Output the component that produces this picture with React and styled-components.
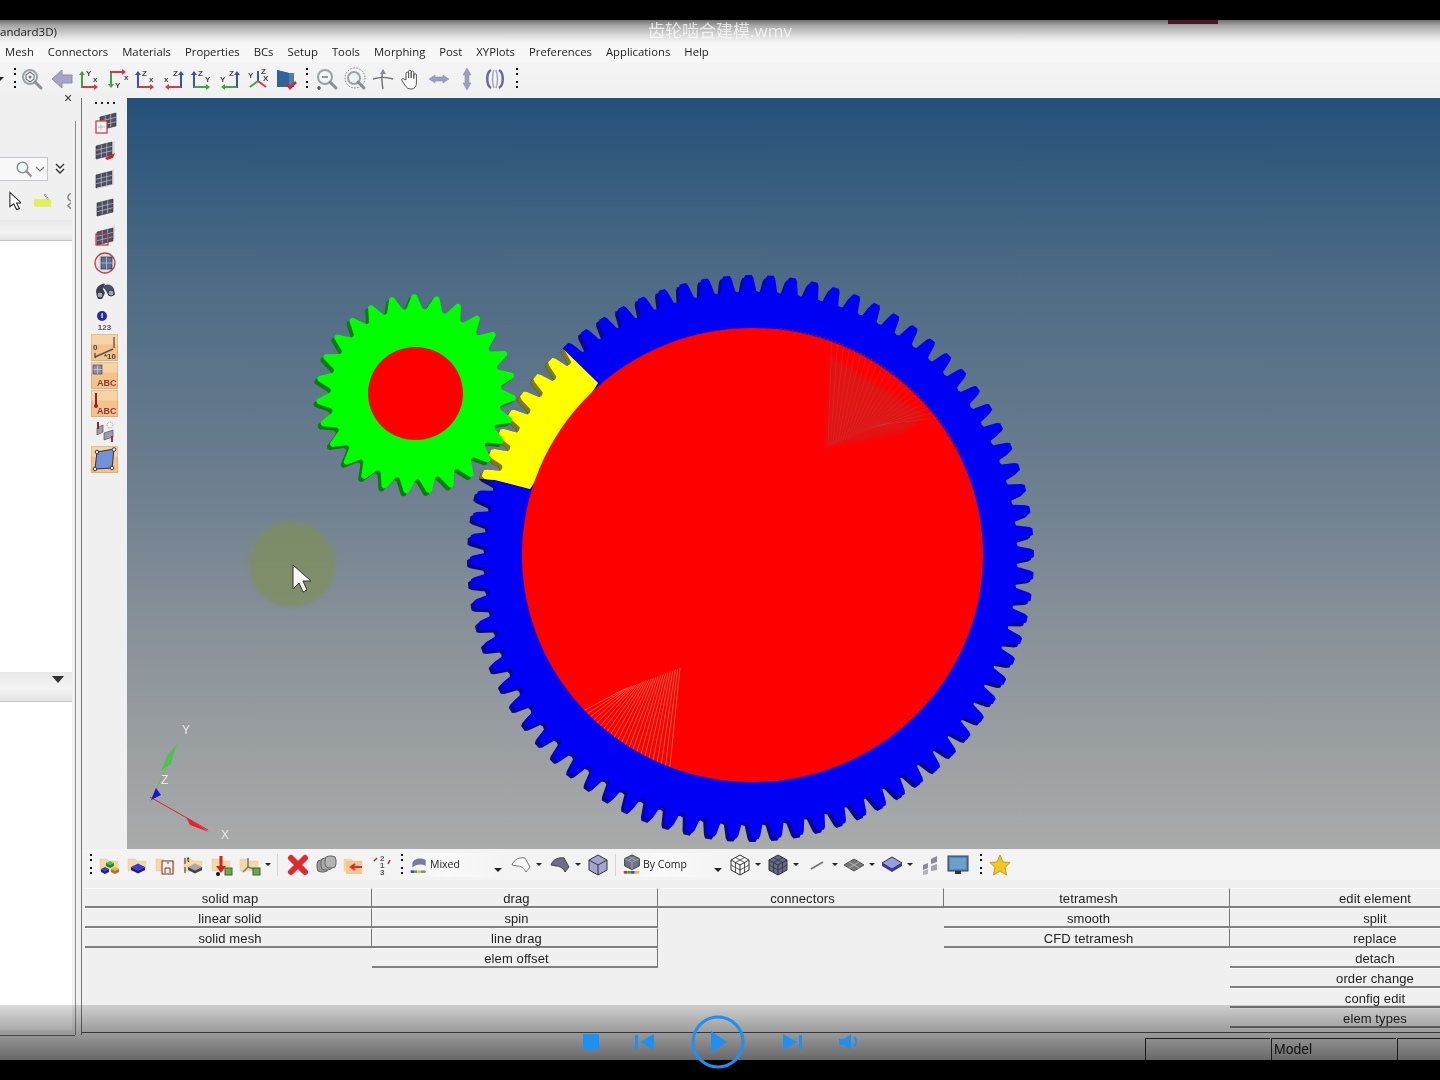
import styled, { createGlobalStyle } from 'styled-components';

const GlobalStyle = createGlobalStyle`
  html, body {
    margin: 0;
    padding: 0;
    background: #000;
  }
`;

const UI_FONT = `'Open Sans', 'Noto Sans CJK SC', sans-serif`;
const CLASSIC_FONT = `'Liberation Sans', Arial, sans-serif`;

const Frame = styled.div`
  position: relative;
  width: 1440px;
  height: 1080px;
  display: flex;
  flex-direction: column;
  overflow: hidden;
  background: #000;
  filter: blur(0.35px);
`;

const BlackStrip = styled.div`
  flex: 0 0 20px;
  background: #000;
`;

const TitleBar = styled.div`
  position: relative;
  flex: 0 0 23px;
  display: flex;
  align-items: center;
  background: linear-gradient(#6f6f6f 0%, #a8a8a8 25%, #dedede 70%, #f7f7f7 100%);
  font: 11.5px ${UI_FONT};
  color: #222;
`;

const WindowTab = styled.div`
  position: absolute;
  left: 1168px;
  top: 0;
  width: 50px;
  height: 4px;
  background: #4a1524;
`;

const VideoName = styled.div`
  position: absolute;
  left: 648px;
  top: 0;
  font: 17px ${UI_FONT};
  line-height: 21px;
  color: rgba(255, 255, 255, 0.72);
  white-space: nowrap;
`;

const MenuBar = styled.div`
  flex: 0 0 20px;
  box-sizing: border-box;
  display: flex;
  align-items: center;
  gap: 14px;
  padding: 0 0 3px 5px;
  background: #f7f7f7;
  font: 11.3px ${UI_FONT};
  color: #1c1c1c;
`;

const MainToolbar = styled.div`
  flex: 0 0 35px;
  display: flex;
  align-items: flex-start;
  padding-top: 4px;
  box-sizing: border-box;
  background: linear-gradient(#f4f4f4, #f0f0f0);
`;

const Slot = styled.div`
  flex: 0 0 ${(p) => p.$w || 28}px;
  height: 24px;
  margin-left: ${(p) => p.$ml || 0}px;
  display: flex;
  align-items: center;
  justify-content: center;
`;

const Grip = styled.div`
  flex: 0 0 ${(p) => p.$w || 14}px;
  margin-left: ${(p) => p.$ml || 0}px;
  height: 24px;
  display: flex;
  flex-direction: column;
  align-items: center;
  justify-content: space-between;
  padding: 1px 0;
  box-sizing: border-box;
  &::before, &::after {
    content: '';
    width: 2px;
    height: 9px;
    background: repeating-linear-gradient(#111 0 2px, transparent 2px 5px);
  }
`;

const Caret = styled.div`
  flex: 0 0 auto;
  margin-left: ${(p) => p.$ml || 0}px;
  margin-top: 10px;
  width: 0;
  height: 0;
  border-left: ${(p) => p.$size || 3}px solid transparent;
  border-right: ${(p) => p.$size || 3}px solid transparent;
  border-top: ${(p) => p.$size || 3}px solid #222;
`;

const Divider = styled.div`
  flex: 0 0 1px;
  height: 22px;
  margin: 1px ${(p) => p.$m || 6}px 0;
  background: #d4d4d4;
`;

const Workspace = styled.div`
  position: relative;
  flex: 0 0 932px;
  display: flex;
  background: #f0f0f0;
`;

const LeftPanel = styled.div`
  flex: 0 0 72px;
  display: flex;
  flex-direction: column;
  overflow: hidden;
`;

const CloseMark = styled.div`
  position: absolute;
  top: -8px;
  left: 64px;
  font: 14px/16px ${CLASSIC_FONT};
  color: #333;
`;

const PanelHead = styled.div`
  flex: 0 0 59px;
`;

const SearchRow = styled.div`
  flex: 0 0 24px;
  display: flex;
  align-items: center;
`;

const SearchField = styled.div`
  width: 48px;
  height: 24px;
  box-sizing: border-box;
  display: flex;
  align-items: center;
  justify-content: flex-end;
  gap: 2px;
  padding-right: 2px;
  background: #f8f8f8;
  border: 1px solid #c2c6cc;
  border-left: none;
`;

const DoubleChevron = styled.div`
  margin-left: 7px;
  display: flex;
`;

const PanelTools = styled.div`
  flex: 0 0 39px;
  display: flex;
  align-items: center;
  gap: 12px;
  padding-left: 8px;
  box-sizing: border-box;
`;

const PanelBand = styled.div`
  flex: 0 0 ${(p) => p.$h}px;
  display: flex;
  justify-content: flex-end;
  padding: 4px 8px 0 0;
  box-sizing: border-box;
  background: linear-gradient(#e8e8e8, #f4f4f4 60%, #e2e2e2);
  border-bottom: 1px solid #c8c8c8;
`;

const PanelList = styled.div`
  flex: ${(p) => (p.$h ? `0 0 ${p.$h}px` : '1')};
  background: #fff;
`;

const PanelGutter = styled.div`
  flex: 0 0 10px;
  background:
    linear-gradient(#8c8c8c, #8c8c8c) 3px 23px / 1px 100% no-repeat,
    linear-gradient(#777, #777) 9px 0 / 1px 100% no-repeat,
    #f0f0f0;
`;

const RightArea = styled.div`
  flex: 1;
  min-width: 0;
  display: flex;
  flex-direction: column;
`;

const UpperRow = styled.div`
  flex: 0 0 751px;
  display: flex;
`;

const SideToolbar = styled.div`
  flex: 0 0 45px;
  display: flex;
  flex-direction: column;
  align-items: center;
  background: #f0f0f0;
`;

const HorizontalGrip = styled.div`
  flex: 0 0 11px;
  width: 20px;
  margin-left: 1px;
  background: repeating-linear-gradient(90deg, #222 0 2px, transparent 2px 6px) 0 4px / 100% 2px no-repeat;
`;

const SideSlot = styled.div`
  flex: 0 0 28px;
  width: 28px;
  display: flex;
  align-items: center;
  justify-content: center;
`;

const InfoStack = styled.div`
  flex: 0 0 28px;
  display: flex;
  flex-direction: column;
  align-items: center;
  justify-content: flex-end;
  font: bold 8px ${CLASSIC_FONT};
  line-height: 10px;
  color: #555;
`;

const InfoDot = styled.div`
  width: 10px;
  height: 10px;
  margin: 0 5px 2px 0;
  border-radius: 50%;
  background: #2a2aa0;
  color: #fff;
  text-align: center;
  font: bold 8px/10px ${CLASSIC_FONT};
`;

const Viewport = styled.div`
  flex: 1;
  min-width: 0;
  background: linear-gradient(#245079 0%, #4d6b85 24%, #6e7f90 52%, #8a9299 72%, #a9abaa 100%);
`;

const ViewportCanvas = styled.svg`
  display: block;
  width: 1313px;
  height: 751px;
`;

const BottomToolbar = styled.div`
  flex: 0 0 31px;
  display: flex;
  align-items: flex-start;
  padding: 4px 0 0 2px;
  box-sizing: border-box;
  background: #f3f3f3;
`;

const Combo = styled.div`
  flex: 0 0 ${(p) => p.$w}px;
  margin-left: ${(p) => p.$ml || 0}px;
  height: 24px;
  display: flex;
  align-items: center;
  background: linear-gradient(90deg, #f3f3f3, #fafafa 40%, #f3f3f3);
  font: ${(p) => p.$fs}px ${UI_FONT};
  color: #222;
`;

const ComboLabel = styled.span`
  flex: 1;
  padding-bottom: 2px;
`;

const PanelGrid = styled.div`
  flex: 1;
  display: grid;
  grid-template-columns: 287px repeat(4, 286px);
  align-items: start;
  padding: 8px 0 0 3px;
  overflow: hidden;
  background: #f0f0f0;
`;

const PanelColumn = styled.div`
  display: flex;
  flex-direction: column;
`;

const PanelButton = styled.div`
  height: 20px;
  box-sizing: border-box;
  padding-left: 4px;
  text-align: center;
  font: 13px/19px ${CLASSIC_FONT};
  letter-spacing: 0.1px;
  color: #222;
  border-bottom: 2px solid #808080;
  border-right: ${(p) => (p.$open ? 'none' : '1px solid #777')};
  border-top: 1px solid #fbfbfb;
`;

const StatusBar = styled.div`
  flex: 0 0 30px;
  display: flex;
  align-items: flex-end;
  padding-left: 1145px;
  background:
    linear-gradient(#8c8c8c, #8c8c8c) 75px 0 / 1px 5px no-repeat,
    linear-gradient(#777, #777) 81px 0 / 1px 5px no-repeat,
    linear-gradient(#555, #555) 81px 2px / 100% 1px no-repeat,
    linear-gradient(#777, #777) 0 5px / 75px 1px no-repeat,
    #f0f0f0;
`;

const StatusCell = styled.div`
  flex: 0 0 125px;
  height: 22px;
  margin-right: 1px;
  box-sizing: border-box;
  padding-left: 2px;
  border-top: 1px solid #333;
  border-left: 1px solid #333;
  font: 14px/21px ${CLASSIC_FONT};
  color: #222;
`;

const VideoShade = styled.div`
  position: absolute;
  left: 0;
  right: 0;
  top: 1005px;
  height: 55px;
  background: linear-gradient(rgba(0, 0, 0, 0.14), rgba(0, 0, 0, 0.57));
  pointer-events: none;
`;

const PlayerControls = styled.div`
  position: absolute;
  left: 580px;
  top: 1014px;
  display: flex;
  align-items: center;
  color: #1e90f2;
`;

const PlayerSlot = styled.div`
  flex: 0 0 ${(p) => p.$w}px;
  height: 55px;
  display: flex;
  align-items: center;
  justify-content: center;
`;

const MENU_ITEMS = ['Mesh', 'Connectors', 'Materials', 'Properties', 'BCs', 'Setup', 'Tools', 'Morphing', 'Post', 'XYPlots', 'Preferences', 'Applications', 'Help'];

const PANEL_COLUMNS = [
  ['solid map', 'linear solid', 'solid mesh'],
  ['drag', 'spin', 'line drag', 'elem offset'],
  ['connectors'],
  ['tetramesh', 'smooth', 'CFD tetramesh'],
  ['edit element', 'split', 'replace', 'detach', 'order change', 'config edit', 'elem types'],
];

/* ---------- small drawing helpers ---------- */

const Ico = ({ s = 24, children }) => (
  <svg width={s} height={s} viewBox="0 0 24 24" fill="none">
    {children}
  </svg>
);

const Lbl = ({ x, y, c = '#444', size = 8, children }) => (
  <text x={x} y={y} fontSize={size} fontWeight="bold" fontFamily="Liberation Sans, sans-serif" fill={c}>
    {children}
  </text>
);

const AxisArrow = ({ x1, y1, x2, y2, c }) => {
  const vertical = x1 === x2;
  const d = vertical ? Math.sign(y2 - y1) : Math.sign(x2 - x1);
  const head = vertical
    ? `${x2 - 3},${y2 - 3 * d} ${x2 + 3},${y2 - 3 * d} ${x2},${y2 + d}`
    : `${x2 - 3 * d},${y2 - 3} ${x2 - 3 * d},${y2 + 3} ${x2 + d},${y2}`;
  return (
    <g>
      <line x1={x1} y1={y1} x2={x2} y2={y2} stroke={c} strokeWidth="2" />
      <polygon points={head} fill={c} />
    </g>
  );
};

const GREEN = '#3fa53f';
const RED = '#d8384a';
const BLUE = '#3a4fb8';

const AxisIcon = ({ mode, a, b, ca, cb }) => (
  <Ico>
    {mode === 'up' && (
      <>
        <AxisArrow x1={4} y1={21} x2={4} y2={5} c={ca} />
        <AxisArrow x1={4} y1={20} x2={19} y2={20} c={cb} />
        <Lbl x={8} y={9}>{a}</Lbl>
        <Lbl x={15} y={15}>{b}</Lbl>
      </>
    )}
    {mode === 'down' && (
      <>
        <AxisArrow x1={5} y1={5} x2={5} y2={20} c={ca} />
        <AxisArrow x1={4} y1={5} x2={19} y2={5} c={cb} />
        <Lbl x={9} y={21}>{a}</Lbl>
        <Lbl x={18} y={13}>{b}</Lbl>
      </>
    )}
    {mode === 'left' && (
      <>
        <AxisArrow x1={19} y1={21} x2={19} y2={5} c={ca} />
        <AxisArrow x1={19} y1={20} x2={4} y2={20} c={cb} />
        <Lbl x={11} y={9}>{a}</Lbl>
        <Lbl x={2} y={15}>{b}</Lbl>
      </>
    )}
  </Ico>
);

const Magnifier = ({ s = 24, children, ring = '#9aa3a8' }) => (
  <Ico s={s}>
    <circle cx="10" cy="10" r="7" fill="#f4f6f7" stroke={ring} strokeWidth="2" />
    <line x1="15" y1="15" x2="21" y2="21" stroke="#8a8f94" strokeWidth="3" strokeLinecap="round" />
    {children}
  </Ico>
);

const Quad = ({ x, y, c = '#4c4f60' }) => (
  <g transform={`translate(${x} ${y}) skewY(-14)`}>
    <rect width="16" height="13" fill={c} stroke="#2d2f3a" strokeWidth="0.6" />
    <path d="M5.300 0v13M10.700 0v13M0 4.300h16M0 8.700h16" stroke="#c9ccd6" strokeWidth="0.6" />
  </g>
);

const FolderBack = () => <path d="M2 6h7l2 2h9v10H2z" fill="#f2d9a6" stroke="#e8c88c" strokeWidth="0.5" />;

const Block = ({ x, y, c, d, w = 6 }) => (
  <g>
    <polygon points={`${x},${y} ${x + w},${y - w / 2} ${x + 2 * w},${y} ${x + w},${y + w / 2}`} fill={c} />
    <polygon points={`${x},${y} ${x + w},${y + w / 2} ${x + 2 * w},${y} ${x + 2 * w},${y + 3} ${x + w},${y + 3 + w / 2} ${x},${y + 3}`} fill={d} />
  </g>
);

const OrangeTile = ({ children }) => (
  <svg width="27" height="27" viewBox="0 0 27 27" fill="none">
    <rect x="0.5" y="0.5" width="26" height="26" fill="#f4c28a" stroke="#d8b078" />
    <rect x="0.5" y="0.5" width="26" height="10" fill="#f8dab0" opacity="0.7" />
    {children}
  </svg>
);

const Cube = ({ fill = '#a4a4d0', grid }) => (
  <Ico>
    <polygon points="12,2 21,7 21,17 12,22 3,17 3,7" fill={fill} stroke="#333" strokeWidth="1" />
    <path d="M3 7l9 5 9-5M12 12v10" stroke="#333" strokeWidth="1" fill="none" />
    {grid && <path d="M7.500 4.500l9 5M16.500 4.500l-9 5M3 12l9 5 9-5M7.500 9.500v10M16.500 9.500v10" stroke="#333" strokeWidth="0.8" />}
  </Ico>
);

const ToolbarTop = () => (
  <MainToolbar>
    <Caret $ml={-4} $size={4} />
    <Grip $ml={8} $w={6} />
    <Slot>
      <Magnifier>
        <polygon points="10,5 14,8 14,12 10,15 6,12 6,8" fill="none" stroke="#777" strokeWidth="1.200" />
        <circle cx="10" cy="10" r="1.500" fill="#777" />
      </Magnifier>
    </Slot>
    <Slot $ml={2}>
      <Ico>
        <polygon points="2,12 12,3 12,8 22,8 22,16 12,16 12,21" fill="#a7a2c8" stroke="#8f8bb0" strokeWidth="1" />
      </Ico>
    </Slot>
    <Slot><AxisIcon mode="up" a="Y" b="x" ca={GREEN} cb={RED} /></Slot>
    <Slot><AxisIcon mode="down" a="Y" b="x" ca={GREEN} cb={RED} /></Slot>
    <Slot><AxisIcon mode="up" a="Z" b="x" ca={BLUE} cb={RED} /></Slot>
    <Slot><AxisIcon mode="left" a="Z" b="x" ca={BLUE} cb={RED} /></Slot>
    <Slot><AxisIcon mode="up" a="Z" b="Y" ca={BLUE} cb={GREEN} /></Slot>
    <Slot><AxisIcon mode="left" a="Z" b="Y" ca={BLUE} cb={GREEN} /></Slot>
    <Slot>
      <Ico>
        <path d="M12 14V4" stroke={BLUE} strokeWidth="2" />
        <path d="M12 14l8 6" stroke={RED} strokeWidth="2" />
        <path d="M12 14l-8 6" stroke={GREEN} strokeWidth="2" />
        <Lbl x={2} y={11}>Y</Lbl>
        <Lbl x={15} y={7}>Z</Lbl>
        <Lbl x={17} y={14}>X</Lbl>
      </Ico>
    </Slot>
    <Slot>
      <Ico>
        <polygon points="3,3 15,6 20,6 20,20 3,20" fill="#4a7fb0" />
        <polygon points="3,3 15,6 15,20 3,20" fill="#2f6496" />
        <path d="M13 17l3 4 6-6" stroke="#d8202c" strokeWidth="2.500" />
      </Ico>
    </Slot>
    <Grip $w={14} />
    <Slot $ml={-1}>
      <Magnifier>
        <path d="M7 10h6" stroke="#777" strokeWidth="1.500" />
        <path d="M2 21h4M4 19v4" stroke="#333" strokeWidth="1.200" />
      </Magnifier>
    </Slot>
    <Slot>
      <Ico>
        <circle cx="12" cy="11" r="10" stroke="#555" strokeWidth="0.800" strokeDasharray="1.500 1.500" />
        <circle cx="11" cy="11" r="6" fill="#eef0f2" stroke="#9aa3a8" strokeWidth="2" />
        <line x1="15" y1="15" x2="21" y2="21" stroke="#8a8f94" strokeWidth="3" strokeLinecap="round" />
      </Ico>
    </Slot>
    <Slot>
      <Ico>
        <path d="M2 12c6-2 14-2 20 0M12 3c-1.500 6-1.500 12 0 19" stroke="#6c6f78" strokeWidth="1.400" />
        <polygon points="12,2 9,7 15,7" fill="#8b8b9a" />
      </Ico>
    </Slot>
    <Slot>
      <Ico>
        <path d="M7 13V6.500a1.300 1.300 0 0 1 2.600 0V11V4.500a1.300 1.300 0 0 1 2.600 0V11V5.500a1.300 1.300 0 0 1 2.600 0V11.500V8a1.300 1.300 0 0 1 2.600 0v8c0 3.500-2 6-5.500 6-3 0-4.500-1.500-6-4l-3-4.500c-.8-1.500 1-2.500 2-1.500z" fill="#fdfdfd" stroke="#555" strokeWidth="1" />
      </Ico>
    </Slot>
    <Slot>
      <Ico>
        <polygon points="2,12 8,8 8,10 16,10 16,8 22,12 16,16 16,14 8,14 8,16" fill="#9d9dc6" stroke="#8383a8" strokeWidth="0.500" />
      </Ico>
    </Slot>
    <Slot>
      <Ico>
        <polygon points="12,1 16,8 14,8 14,16 16,16 12,23 8,16 10,16 10,8 8,8" fill="#9d9dc6" stroke="#8383a8" strokeWidth="0.500" />
      </Ico>
    </Slot>
    <Slot>
      <Ico>
        <path d="M8 3C3 6 3 18 8 21M16 3c5 3 5 15 0 18" stroke="#6a6a9c" strokeWidth="2.500" />
        <path d="M11 3c-2 5-2 13 0 18M13 3c2 5 2 13 0 18" stroke="#a4a4c8" strokeWidth="1.500" />
      </Ico>
    </Slot>
    <Grip $w={16} />
  </MainToolbar>
);

const SIDE_ICONS = [
  <Ico key="a"><Quad x={7} y={6} /><rect x="3" y="10" width="11" height="12" fill="#fdf4f4" stroke="#c43040" strokeWidth="1.200" /><path d="M8 13v6M5 16h7" stroke="#999" strokeWidth="0.600" /></Ico>,
  <Ico key="b"><Quad x={3} y={7} /><path d="M21 2v12" stroke="#ccc" /><path d="M12 19l10-5-2 5-6 2z" fill="#d8202c" /></Ico>,
  <Ico key="c"><Quad x={3} y={8} /><path d="M4 21l14-3M20 2v16" stroke="#c8c8c8" /></Ico>,
  <Ico key="d"><Quad x={4} y={8} /></Ico>,
  <Ico key="e"><path d="M21 2v14" stroke="#ccc" /><Quad x={4} y={9} /><rect x="3" y="11" width="12" height="11" stroke="#c43040" strokeWidth="1.200" /></Ico>,
  <Ico key="f"><circle cx="12" cy="12" r="10" fill="#e8dede" stroke="#b04a50" strokeWidth="1.300" /><rect x="8" y="6" width="11" height="12" fill="#5b6f98" stroke="#2d3040" strokeWidth="0.700" /><path d="M13.500 6v12M8 12h11" stroke="#c9ccd6" strokeWidth="0.700" /></Ico>,
  <Ico key="g"><path d="M3 13c0-5 5-9 9-8l-2 5 2 4-3 6H5z" fill="#3a3f52" /><path d="M10 8c3-4 9-3 11 2l1 6-6 1-3-5z" fill="#4a5068" /><circle cx="7" cy="16" r="3" fill="#9aa" stroke="#334" /><circle cx="18" cy="14" r="3" fill="#9aa" stroke="#334" /></Ico>,
];

const ORANGE_ICONS = [
  <OrangeTile key="a"><path d="M4 23l18-8" stroke="#555" strokeWidth="1.500" /><path d="M4 19v5M23 3v11" stroke="#444" strokeWidth="1.200" /><Lbl x={2} y={16} size={8} c="#444">0</Lbl><Lbl x={13} y={25} size={8} c="#444">*10</Lbl></OrangeTile>,
  <OrangeTile key="b"><rect x="2" y="3" width="9" height="9" fill="#8a8ea8" stroke="#333" strokeWidth="0.600" /><path d="M6.500 3v9M2 7.500h9" stroke="#ddd" strokeWidth="0.600" /><Lbl x={6} y={24} size={9} c="#8a3b3b">ABC</Lbl></OrangeTile>,
  <OrangeTile key="c"><path d="M5 3v12" stroke="#8a2430" strokeWidth="2" /><circle cx="5" cy="16" r="2" fill="#8a2430" /><Lbl x={6} y={24} size={9} c="#8a3b3b">ABC</Lbl></OrangeTile>,
];

const ToolbarSide = () => (
  <SideToolbar>
    <HorizontalGrip />
    {SIDE_ICONS.map((icon, i) => (
      <SideSlot key={i}>{icon}</SideSlot>
    ))}
    <InfoStack>
      <InfoDot>i</InfoDot>
      123
    </InfoStack>
    {ORANGE_ICONS.map((icon, i) => (
      <SideSlot key={i}>{icon}</SideSlot>
    ))}
    <SideSlot>
      <Ico>
        <path d="M4 9l6-3v7l-6 3z" fill="#9a9cb0" stroke="#444" strokeWidth="0.600" />
        <path d="M5 3v7" stroke="#8a2430" strokeWidth="2" />
        <path d="M11 14l9-3v7l-9 3z" fill="#9a9cb0" stroke="#444" strokeWidth="0.600" />
        <path d="M19 17v6" stroke="#c02030" strokeWidth="2" />
        <circle cx="17" cy="6" r="3" stroke="#999" strokeDasharray="1 1" />
      </Ico>
    </SideSlot>
    <SideSlot>
      <OrangeTile>
        <polygon points="6,6 23,3 21,22 4,23" fill="#6f92d8" stroke="#333" strokeWidth="1" />
        <circle cx="6" cy="6" r="1.800" fill="#fff" stroke="#333" />
        <circle cx="23" cy="3.500" r="1.800" fill="#fff" stroke="#333" />
        <circle cx="21" cy="22" r="1.800" fill="#fff" stroke="#333" />
        <circle cx="4" cy="23" r="1.800" fill="#fff" stroke="#333" />
      </OrangeTile>
    </SideSlot>
  </SideToolbar>
);

const ToolbarBottom = () => (
  <BottomToolbar>
    <Grip $ml={2} $w={10} />
    <Slot>
      <Ico><FolderBack /><Block x={8} y={10} c="#33cc33" d="#1f8a1f" w={4} /><Block x={3} y={16} c="#3a3ad0" d="#20208a" w={4} /><Block x={13} y={16} c="#e8b040" d="#a87820" w={4} /></Ico>
    </Slot>
    <Slot>
      <Ico><FolderBack /><Block x={5} y={14} c="#3a3ad8" d="#1c1c80" w={7} /></Ico>
    </Slot>
    <Slot>
      <Ico><FolderBack /><rect x="8" y="8" width="11" height="13" fill="#f0f0e8" stroke="#7a3030" /><path d="M11 20v-5h5v5M13 10h2" stroke="#7a3030" /></Ico>
    </Slot>
    <Slot>
      <Ico><FolderBack /><Block x={6} y={14} c="#a8a8a8" d="#444" w={7} /><path d="M3 5v6M3 14v6" stroke="#333" /><Lbl x={5} y={9} size={7} c="#222">t</Lbl></Ico>
    </Slot>
    <Slot>
      <Ico><FolderBack /><path d="M11 3v13" stroke="#d02020" strokeWidth="3" /><polygon points="6,13 16,13 11,20" fill="#d02020" /><circle cx="8" cy="21" r="2" fill="#111" /><rect x="15" y="15" width="7" height="7" fill="#6aa84f" stroke="#2d6d2d" /></Ico>
    </Slot>
    <Slot>
      <Ico><FolderBack /><path d="M10 5v9l-5 5M10 14l8 3" stroke="#777" strokeWidth="1.500" /><rect x="15" y="15" width="7" height="7" fill="#6aa84f" stroke="#2d6d2d" /></Ico>
    </Slot>
    <Caret $ml={1} />
    <Divider $m={6} />
    <Slot>
      <Ico><path d="M5 5l14 14M19 5L5 19" stroke="#e02830" strokeWidth="6" strokeLinecap="round" /></Ico>
    </Slot>
    <Slot>
      <Ico><rect x="3" y="7" width="11" height="12" rx="4" fill="#9a9a9a" stroke="#666" /><rect x="7" y="5" width="11" height="12" rx="4" fill="#aaa" stroke="#666" /><rect x="11" y="3" width="11" height="12" rx="4" fill="#b4b4b4" stroke="#666" /></Ico>
    </Slot>
    <Slot>
      <Ico><FolderBack /><rect x="4" y="8" width="16" height="13" fill="#f0c890" /><path d="M20 14H10M13 11l-4 3 4 3" stroke="#e02830" strokeWidth="2" /></Ico>
    </Slot>
    <Slot>
      <Ico><Lbl x={10} y={8} c="#555" size={8}>2</Lbl><Lbl x={10} y={15} c="#555" size={8}>1</Lbl><Lbl x={10} y={22} c="#555" size={8}>3</Lbl><path d="M4 8l3-3M20 7l-2 4" stroke="#c02030" strokeWidth="1.500" /></Ico>
    </Slot>
    <Grip $w={12} />
    <Combo $w={97} $fs={10.5}>
      <Slot $w={22}>
        <Ico s={20}><path d="M4 11c0-6 8-9 16-5v7C13 10 8 12 4 15z" fill="#7a7a9c" /><path d="M2 20h4" stroke="#3a3ad0" strokeWidth="3" /><path d="M6 20h4" stroke="#33bb33" strokeWidth="3" /><path d="M10 20h4" stroke="#e8c020" strokeWidth="3" /><path d="M14 20h6" stroke="#888" strokeWidth="3" /></Ico>
      </Slot>
      <ComboLabel>Mixed</ComboLabel>
      <Caret $size={4} />
      <Slot $w={3} />
    </Combo>
    <Slot $ml={2}>
      <Ico><path d="M3 12c2-6 8-8 13-7l5 9-4 5c-2-4-5-6-9-6z" fill="#fafafa" stroke="#777" /></Ico>
    </Slot>
    <Caret $ml={1} />
    <Slot $ml={4}>
      <Ico><path d="M3 12c2-6 8-8 13-7l5 9-4 5c-2-4-5-6-9-6z" fill="#6d6d88" stroke="#444" /></Ico>
    </Slot>
    <Caret $ml={1} />
    <Slot $ml={3}><Cube /></Slot>
    <Divider $m={3} />
    <Combo $w={105} $fs={10.5} $ml={1}>
      <Slot $w={23}>
        <Ico s={22}><polygon points="12,1 20,5 20,13 12,17 4,13 4,5" fill="#6f7188" stroke="#333" /><path d="M4 5l8 4 8-4M12 9v8M8 3l8 4M16 3L8 7" stroke="#ccc" strokeWidth="0.600" /><path d="M3 20h4" stroke="#d03030" strokeWidth="3" /><path d="M7 20h4" stroke="#33aa33" strokeWidth="3" /><path d="M11 20h4" stroke="#3050d0" strokeWidth="3" /><path d="M15 20h5" stroke="#e8c020" strokeWidth="3" /></Ico>
      </Slot>
      <ComboLabel>By Comp</ComboLabel>
      <Caret $size={4} />
      <Slot $w={3} />
    </Combo>
    <Slot $ml={1}><Cube fill="#f6f6f6" grid /></Slot>
    <Caret $ml={1} />
    <Slot $ml={3}><Cube fill="#66688a" grid /></Slot>
    <Caret $ml={1} />
    <Slot $ml={4}>
      <Ico><path d="M6 16L18 9" stroke="#777" strokeWidth="2" /></Ico>
    </Slot>
    <Caret $ml={1} />
    <Slot $ml={2}>
      <Ico><polygon points="12,6 22,12 12,18 2,12" fill="#777" stroke="#555" /><path d="M7 9l10 6M17 9L7 15" stroke="#ccc" strokeWidth="0.700" /></Ico>
    </Slot>
    <Caret $ml={1} />
    <Slot $ml={3}>
      <Ico><polygon points="12,4 22,10 12,16 2,10" fill="#9a9ae8" stroke="#333" /><polygon points="2,10 12,16 22,10 22,13 12,19 2,13" fill="#3a3a98" /></Ico>
    </Slot>
    <Caret $ml={1} />
    <Slot $ml={3}>
      <Ico>
        <polygon points="5,12 10,10 10,15 5,17" fill="#8a8a94" />
        <polygon points="5,18 10,16 10,21 5,22" fill="#b4b4bc" />
        <polygon points="13,6 19,3 19,9 13,11" fill="#8a8a94" />
        <polygon points="13,13 19,11 19,17 13,18" fill="#a4a4ac" />
      </Ico>
    </Slot>
    <Slot>
      <Ico><rect x="2" y="3" width="20" height="15" fill="#4f86b8" stroke="#3a3f48" /><rect x="4" y="5" width="16" height="11" fill="#6ba0cc" /><path d="M9 18h6v3H9z" fill="#333" /></Ico>
    </Slot>
    <Grip $w={14} $ml={2} />
    <Slot $ml={-2}>
      <Ico><polygon points="12,2 15,9 22,9.500 17,14.500 18.500,22 12,18 5.500,22 7,14.500 2,9.500 9,9" fill="#f2c820" stroke="#c89810" /></Ico>
    </Slot>
  </BottomToolbar>
);

/* ---------- the model in the graphics area ---------- */

const polar = (cx, cy, r, deg) => {
  const a = (deg * Math.PI) / 180;
  return [cx + r * Math.sin(a), cy - r * Math.cos(a)];
};

const gearPoints = (cx, cy, teeth, phase, profile) => {
  const pitch = 360 / teeth;
  const pts = [];
  for (let i = 0; i < teeth; i++) {
    const a = phase + i * pitch;
    profile.forEach(([k, r]) => pts.push(polar(cx, cy, r, a + k * pitch).map((v) => v.toFixed(1)).join(',')));
  }
  return pts.join(' ');
};

const BIG = gearPoints(752, 557, 80, 3.8, [
  [-0.5, 265],
  [-0.36, 266],
  [-0.22, 279],
  [-0.14, 282],
  [0.14, 282],
  [0.22, 279],
  [0.36, 266],
]);
const SMALL = gearPoints(416, 394, 27, -1, [
  [-0.5, 85],
  [-0.4, 86],
  [-0.1, 99],
  [0, 100],
  [0.1, 99],
  [0.4, 86],
]);

const range = (n) => Array.from({ length: n }, (_, i) => i);

const Model = () => (
  <ViewportCanvas viewBox="127 98 1313 751">
    <defs>
      <clipPath id="yellowPart">
        <polygon points="598,383 556,342 530,330 440,400 470,478 495,480 530,489" />
      </clipPath>
      <clipPath id="redFace">
        <ellipse cx="752.5" cy="555" rx="230.5" ry="227" />
      </clipPath>
      <filter id="soft" x="-20%" y="-20%" width="140%" height="140%">
        <feGaussianBlur stdDeviation="2" />
      </filter>
    </defs>

    <circle cx="292" cy="564" r="43" fill="#7f8f58" opacity="0.7" filter="url(#soft)" />

    <polygon points={BIG} fill="#08088c" transform="translate(-3 3)" />
    <polygon points={BIG} fill="#0000f4" />
    <g clipPath="url(#yellowPart)">
      <polygon points={BIG} fill="#7f7a18" transform="translate(-3 3)" />
      <polygon points={BIG} fill="#ffff00" />
    </g>
    <ellipse cx="752.5" cy="555" rx="230.5" ry="227" fill="#ff0000" />

    <g clipPath="url(#redFace)">
      <polygon points="830,355 925,415 905,432 825,448" fill="#a04040" opacity="0.3" filter="url(#soft)" />
      {range(22).map((i) => {
        const [x, y] = polar(752.5, 555, 232, 20 + i * 1.6);
        return <line key={i} x1={828 + i * 2.5} y1={446 - i * 1} x2={x} y2={y} stroke="#b06060" strokeWidth="0.800" opacity="0.3" />;
      })}
      {range(24).map((i) => {
        const [x, y] = polar(752.5, 555, 232, 201 + i * 1.15);
        return <line key={i} x1={680 - i * 2.4} y1={668 + i * 0.9} x2={x} y2={y} stroke="#e89a70" strokeWidth="0.900" opacity="0.7" />;
      })}
    </g>
    <path d="M780 329 A 230 227 0 0 1 960 455" fill="none" stroke="#801040" strokeWidth="2" strokeDasharray="2 2" />

    <polygon points={SMALL} fill="#0a7a12" transform="translate(-3 3)" />
    <polygon points={SMALL} fill="#00ff00" />
    <ellipse cx="415.500" cy="393.500" rx="47.500" ry="46.500" fill="#ff0000" />

    <line x1="150" y1="797" x2="208" y2="830" stroke="#e02030" strokeWidth="1" />
    <polygon points="186,817 209,832 190,825" fill="#e82030" />
    <line x1="150" y1="802" x2="177" y2="745" stroke="#66bb55" strokeWidth="1" />
    <polygon points="161,771 171,764 176,745 167,756" fill="#4fc04f" />
    <polygon points="151,800 156,788 161,795" fill="#1418c8" />
    <g fontFamily="Liberation Sans, sans-serif" fontSize="12" fill="#e8e8e8">
      <text x="182" y="734">Y</text>
      <text x="161" y="784">Z</text>
      <text x="221" y="839">X</text>
    </g>

    <path d="M293 565v24l6-6 4 9 4-2-4-9h8z" fill="#f6f6f2" stroke="#333" strokeWidth="1" />
  </ViewportCanvas>
);

const Panel = () => (
  <LeftPanel>
    <PanelHead />
    <SearchRow>
      <SearchField>
        <Magnifier s={18} ring="#7d94a8" />
        <svg width="10" height="10" viewBox="0 0 10 10" fill="none">
          <path d="M1 3l4 4 4-4" stroke="#777" strokeWidth="1.200" />
        </svg>
      </SearchField>
      <DoubleChevron>
        <svg width="10" height="12" viewBox="0 0 10 12" fill="none">
          <path d="M1 1l4 4 4-4M1 6l4 4 4-4" stroke="#333" strokeWidth="1.400" />
        </svg>
      </DoubleChevron>
    </SearchRow>
    <PanelTools>
      <svg width="14" height="20" viewBox="0 0 14 20" fill="none">
        <path d="M2 1v15l4-3 3 6 3-1-3-6h5z" fill="#fff" stroke="#222" strokeWidth="1.100" />
      </svg>
      <svg width="22" height="16" viewBox="0 0 22 16" fill="none">
        <rect x="1" y="6" width="18" height="8" fill="#dff05c" />
        <path d="M12 1l4 5" stroke="#666" strokeWidth="2" strokeDasharray="1 1" />
      </svg>
      <svg width="6" height="18" viewBox="0 0 6 18" fill="none">
        <path d="M5 1C1 3 1 7 5 9M5 11l-3 3 3 3" stroke="#8a8a8a" strokeWidth="1.600" />
      </svg>
    </PanelTools>
    <PanelBand $h={21} />
    <PanelList $h={431} />
    <PanelBand $h={30}>
      <svg width="12" height="7" viewBox="0 0 12 7">
        <polygon points="0,0 12,0 6,7" fill="#333" />
      </svg>
    </PanelBand>
    <PanelList />
  </LeftPanel>
);

const Player = () => (
  <PlayerControls>
    <PlayerSlot $w={22}>
      <svg width="16" height="16"><rect width="16" height="16" fill="currentColor" /></svg>
    </PlayerSlot>
    <PlayerSlot $w={86}>
      <svg width="20" height="16" viewBox="0 0 20 16" fill="currentColor">
        <rect x="0" y="1" width="3" height="14" />
        <polygon points="19,0 19,16 5,8" />
      </svg>
    </PlayerSlot>
    <PlayerSlot $w={60}>
      <svg width="54" height="54" viewBox="0 0 54 54" fill="none">
        <circle cx="27" cy="27" r="25" stroke="currentColor" strokeWidth="3" />
        <polygon points="20,16 36,27 20,38" fill="currentColor" />
      </svg>
    </PlayerSlot>
    <PlayerSlot $w={88}>
      <svg width="20" height="16" viewBox="0 0 20 16" fill="currentColor">
        <polygon points="1,0 15,8 1,16" />
        <rect x="17" y="1" width="3" height="14" />
      </svg>
    </PlayerSlot>
    <PlayerSlot $w={28}>
      <svg width="22" height="16" viewBox="0 0 22 16" fill="currentColor">
        <polygon points="0,5 5,5 12,0 12,16 5,11 0,11" />
        <path d="M15 3c3 3 3 7 0 10" fill="none" stroke="currentColor" strokeWidth="2" />
      </svg>
    </PlayerSlot>
  </PlayerControls>
);

export default function App() {
  return (
    <Frame>
      <GlobalStyle />
      <BlackStrip />
      <TitleBar>
        andard3D)
        <VideoName>齿轮啮合建模.wmv</VideoName>
        <WindowTab />
      </TitleBar>
      <MenuBar>
        {MENU_ITEMS.map((item) => (
          <span key={item}>{item}</span>
        ))}
      </MenuBar>
      <ToolbarTop />
      <Workspace>
        <Panel />
        <CloseMark>×</CloseMark>
        <PanelGutter />
        <RightArea>
          <UpperRow>
            <ToolbarSide />
            <Viewport>
              <Model />
            </Viewport>
          </UpperRow>
          <ToolbarBottom />
          <PanelGrid>
            {PANEL_COLUMNS.map((col, i) => (
              <PanelColumn key={i}>
                {col.map((label) => (
                  <PanelButton key={label} $open={i === 4}>
                    {label}
                  </PanelButton>
                ))}
              </PanelColumn>
            ))}
          </PanelGrid>
        </RightArea>
      </Workspace>
      <StatusBar>
        <StatusCell />
        <StatusCell>Model</StatusCell>
        <StatusCell />
      </StatusBar>
      <BlackStrip />
      <VideoShade />
      <Player />
    </Frame>
  );
}
